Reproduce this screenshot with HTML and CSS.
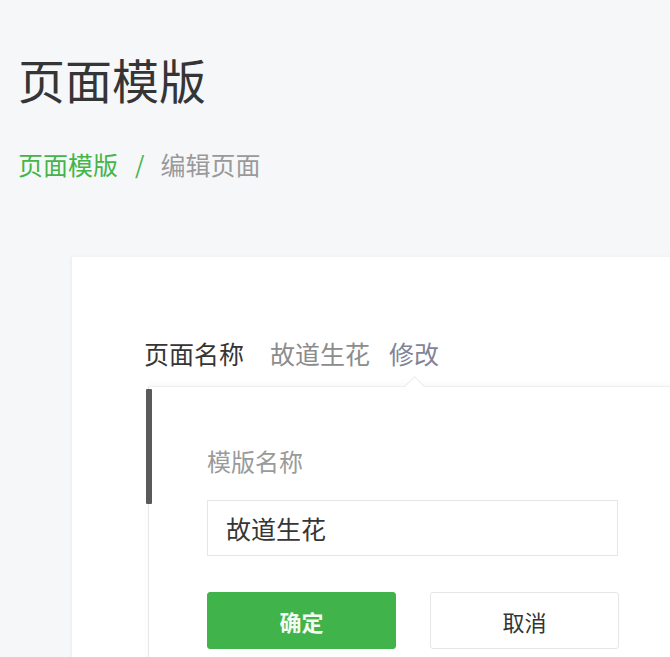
FILE: index.html
```html
<!DOCTYPE html>
<html lang="zh">
<head>
<meta charset="utf-8">
<link rel="stylesheet" href="styles.css">
</head>
<body>
<div class="page">
  <h1 class="title">页面模版</h1>
  <div class="crumbs">
    <span class="crumb-link">页面模版</span>
    <span class="crumb-sep">/</span>
    <span class="crumb-cur">编辑页面</span>
  </div>
  <div class="card">
    <div class="name-row">
      <span class="name-label">页面名称</span>
      <span class="name-value">故道生花</span>
      <span class="name-edit">修改</span>
    </div>
    <div class="popover">
      <div class="pop-arrow"></div>
      <div class="pop-bar"></div>
      <div class="pop-label">模版名称</div>
      <div class="pop-input">故道生花</div>
      <div class="pop-actions">
        <button class="btn btn-primary">确定</button>
        <button class="btn btn-default">取消</button>
      </div>
    </div>
  </div>
</div>
</body>
</html>
```
FILE: styles.css
```css
html, body {
  margin: 0;
  padding: 0;
  background: #f6f7f9;
  overflow: hidden;
  font-family: "Noto Sans CJK SC", "Noto Sans", sans-serif;
}
.page {
  width: 670px;
  height: 657px;
  overflow: hidden;
}
.title {
  margin: 0;
  padding: 51px 0 0 18px;
  font-size: 47px;
  line-height: 56px;
  font-weight: 400;
  color: #353535;
}
.crumbs {
  display: flex;
  align-items: center;
  padding: 40px 0 0 18px;
  font-size: 25px;
  line-height: 34px;
}
.crumb-link { color: #44b549; }
.crumb-sep { color: #44b549; margin: 0 16px 0 17px; font-size: 24px; }
.crumb-cur { color: #9a9a9a; }
.card {
  margin: 76px 0 0 72px;
  width: 700px;
  height: 420px;
  background: #fff;
  box-shadow: -1px 0 3px rgba(0,0,0,0.05);
  padding: 79px 0 0 72px;
  box-sizing: border-box;
}
.name-row {
  display: flex;
  align-items: center;
  font-size: 25px;
  line-height: 34px;
}
.name-label { color: #353535; }
.name-value { color: #8c8c8c; margin-left: 26px; }
.name-edit { color: #7f8499; margin-left: 19px; }
.popover {
  position: relative;
  margin: 16px 0 0 4px;
  background: #fff;
  border-top: 1px solid #eef0f3;
  border-left: 1px solid #e6e8ec;
  box-shadow: 0 -2px 6px rgba(0,0,0,0.03);
  padding: 57px 0 0 58px;
  height: 300px;
  box-sizing: border-box;
}
.pop-arrow {
  position: absolute;
  top: -8px;
  left: 258px;
  width: 14px;
  height: 14px;
  background: #fff;
  border-top: 1px solid #e8eaee;
  border-left: 1px solid #e8eaee;
  transform: rotate(45deg);
}
.pop-bar {
  position: absolute;
  left: -3px;
  top: 2px;
  width: 6px;
  height: 115px;
  background: #5a5a5a;
  border-radius: 1px;
}
.pop-label {
  font-size: 24px;
  line-height: 34px;
  color: #9a9a9a;
}
.pop-input {
  margin-top: 22px;
  width: 411px;
  height: 56px;
  box-sizing: border-box;
  border: 1px solid #e4e6e9;
  padding-left: 18px;
  font-size: 25px;
  line-height: 54px;
  color: #353535;
}
.pop-actions {
  display: flex;
  gap: 34px;
  margin-top: 36px;
}
.btn {
  width: 189px;
  height: 57px;
  box-sizing: border-box;
  border-radius: 3px;
  font-family: inherit;
  font-size: 22px;
  font-weight: 700;
  cursor: pointer;
}
.btn-primary {
  background: #40b34a;
  border: 1px solid #40b34a;
  color: #f3fbf3;
}
.btn-default {
  background: #fff;
  border: 1px solid #e4e6e9;
  color: #353535;
  font-weight: 400;
}
```
